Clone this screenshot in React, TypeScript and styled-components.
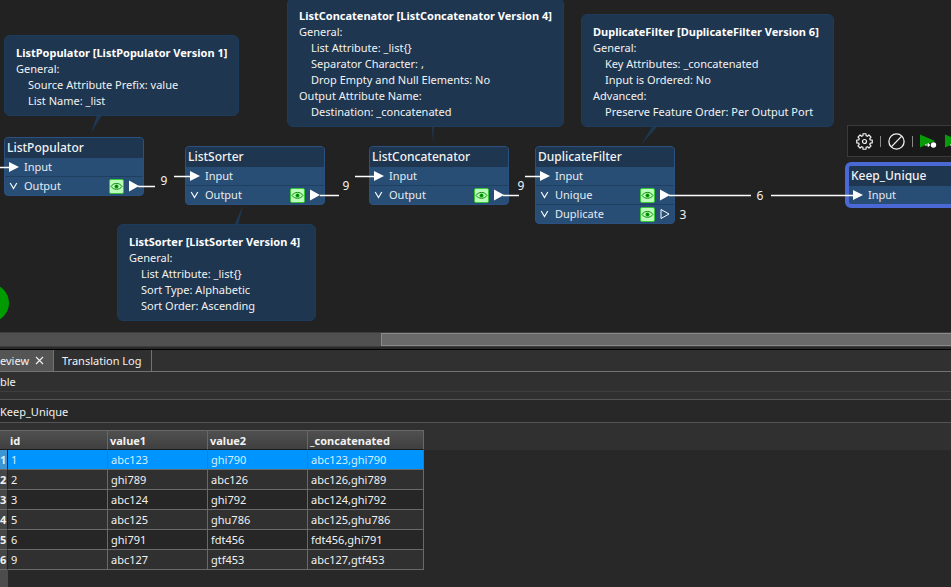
import React from "react";
import styled, { createGlobalStyle, css } from "styled-components";

const GlobalStyle = createGlobalStyle`
  * { box-sizing: border-box; }
  body {
    margin: 0;
    background: #292929;
    color: #f2f2f2;
    font-family: "Noto Sans", "Open Sans", sans-serif;
    font-size: 11px;
    line-height: 16px;
    overflow: hidden;
  }
  button {
    font: inherit;
    color: inherit;
    background: none;
    border: 0;
    padding: 0;
  }
`;

const Page = styled.div`
  display: flex;
  flex-direction: column;
  min-height: 100vh;
`;

const Canvas = styled.main`
  position: relative;
  height: 332px;
  overflow: hidden;
  background: #222222;
`;

const Wires = styled.svg`
  position: absolute;
  inset: 0;
  width: 100%;
  height: 100%;
  pointer-events: none;
`;

const Note = styled.section<{ $x: number; $y: number; $w: number }>`
  position: absolute;
  left: ${(p) => p.$x}px;
  top: ${(p) => p.$y}px;
  width: ${(p) => p.$w}px;
  padding: 9px 11px 6px;
  border: 1px solid #1d3c5c;
  border-radius: 6px;
  background: #1e3650;
  white-space: nowrap;
`;

const NoteTitle = styled.h2`
  margin: 0;
  font-size: 11px;
  line-height: 16px;
  font-weight: 700;
  color: #ffffff;
`;

const NoteLine = styled.div<{ $indent?: boolean }>`
  padding-left: ${(p) => (p.$indent ? 12 : 0)}px;
`;

const NodeBox = styled.section<{ $x: number; $y: number; $selected?: boolean }>`
  position: absolute;
  left: ${(p) => p.$x}px;
  top: ${(p) => p.$y}px;
  width: 140px;
  overflow: hidden;
  border: 1px solid #2b5180;
  border-radius: 4px;
  background: #294e75;
  ${(p) =>
    p.$selected &&
    css`
      border: 4px solid #4a69d4;
      border-radius: 6px;
    `}
`;

const NodeTitle = styled.h3`
  margin: 0;
  padding-left: 2px;
  height: 20px;
  background: #1e3650;
  font-size: 12px;
  line-height: 20px;
  font-weight: 500;
`;

const Port = styled.div`
  display: flex;
  align-items: center;
  gap: 5px;
  height: 18px;
  padding: 0 4px;
  color: #e6ebf0;
  & + & {
    border-top: 1px solid #1f3f61;
    height: 19px;
  }
`;

const PortLabel = styled.span`
  flex: 1;
`;

const IconButton = styled.button`
  display: flex;
  flex: none;
`;

const Count = styled.span<{ $x: number; $y: number }>`
  position: absolute;
  left: ${(p) => p.$x}px;
  top: ${(p) => p.$y}px;
  width: 12px;
  font-size: 12px;
  text-align: center;
`;

const NodeTools = styled.div`
  position: absolute;
  left: 847px;
  top: 125px;
  display: flex;
  align-items: center;
  height: 32px;
  width: 160px;
  gap: 7px;
  padding-left: 8px;
  border: 1px solid #3a3a3a;
  background: #191919;
`;

const Divider = styled.span`
  width: 1px;
  height: 11px;
  background: #8a8a8a;
`;

const RunBadge = styled.button`
  position: absolute;
  left: -29px;
  top: 284px;
  width: 38px;
  height: 38px;
  border-radius: 50%;
  background: #009b00;
`;

const ScrollTrack = styled.div`
  height: 15px;
  padding-left: 40%;
  border-top: 1px solid #3d3d3d;
  border-bottom: 1px solid #3d3d3d;
  background: #505050;
`;

const ScrollThumb = styled.div`
  height: 13px;
  margin-left: 1px;
  border: 1px solid #8a8a8a;
  border-width: 1px 0 1px 1px;
  background: #6a6a6a;
`;

const Splitter = styled.div`
  height: 3px;
  background: #292929;
  border-bottom: 1px solid #000000;
`;

const TabBar = styled.div`
  display: flex;
  height: 22px;
  background: #303030;
  border-bottom: 1px solid #737373;
`;

const Tab = styled.div<{ $active?: boolean }>`
  display: flex;
  align-items: center;
  gap: 6px;
  padding: 0 9px 0 ${(p) => (p.$active ? 0 : 8)}px;
  border-right: 1px solid #737373;
  background: ${(p) => (p.$active ? "#555555" : "#303030")};
`;

const MenuRow = styled.div`
  height: 20px;
  padding-top: 2px;
  background: #303030;
  border-bottom: 1px solid #3e3e3e;
`;

const Gap = styled.div`
  height: 7px;
  background: #303030;
`;

const SourceRow = styled.div`
  height: 24px;
  padding-top: 4px;
  border-top: 1px solid #555555;
  border-bottom: 1px solid #555555;
  background: #282828;
`;

const TableArea = styled.div`
  flex: 1;
  background: linear-gradient(#303030 20px, #282828 20px);
`;

const RowFooter = styled.div`
  width: 8px;
  height: 17px;
  background: #4c4c4c;
`;

const Table = styled.table`
  width: 424px;
  table-layout: fixed;
  border-collapse: separate;
  border-spacing: 0;
`;

const ColHead = styled.th`
  height: 20px;
  padding: 2px 2px 0;
  border-top: 1px solid #686868;
  border-right: 1px solid #686868;
  border-bottom: 1px solid #1c1c1c;
  background: linear-gradient(#505050, #3f3f3f);
  text-align: left;
  font-weight: 700;
  line-height: 16px;
`;

const Corner = styled(ColHead)`
  border-right: 0;
`;

const RowHead = styled.th<{ $selected?: boolean }>`
  height: 20px;
  padding: 0;
  border-right: 1px solid #222222;
  border-bottom: 1px solid #6a6a6a;
  background: ${(p) => (p.$selected ? "#3c94d0" : "#464646")};
  text-align: left;
  font-weight: 700;
  line-height: 18px;
`;

const Cell = styled.td`
  padding: 0 3px;
  border-right: 1px solid #6a6a6a;
  border-bottom: 1px solid #6a6a6a;
  line-height: 18px;
`;

const Row = styled.tr<{ $selected?: boolean }>`
  background: #262626;
  &:nth-child(even) {
    background: #303030;
  }
  ${(p) =>
    p.$selected &&
    css`
      background: #0094fe;
      color: #d5efff;
    `}
`;

const InArrow = () => (
  <svg width="10" height="12" aria-hidden="true">
    <path d="M0 1 10 6 0 11Z" fill="#fff" />
  </svg>
);

const OutArrow = ({ hollow }: { hollow?: boolean }) => (
  <svg width="10" height="12" aria-hidden="true">
    {hollow ? (
      <path d="M1 1.5 9 6 1 10.5Z" fill="none" stroke="#fff" />
    ) : (
      <path d="M0 0.5 10 6 0 11.5Z" fill="#fff" />
    )}
  </svg>
);

const Chevron = () => (
  <svg width="10" height="8" aria-hidden="true">
    <path d="M1.2 1 4.5 6.6 7.8 1" fill="none" stroke="#f0f4f8" strokeWidth="1.2" />
  </svg>
);

const Eye = () => (
  <svg width="15" height="15" aria-hidden="true">
    <rect x="0.5" y="0.5" width="14" height="14" rx="1.5" fill="#b9fdb9" stroke="#37c637" />
    <path d="M2 7.5C4.5 3.4 10.5 3.4 13 7.5 10.5 11.2 4.5 11.2 2 7.5Z" fill="none" stroke="#128a12" />
    <circle cx="7.5" cy="7.4" r="2" fill="#0aa00a" />
    <circle cx="7.5" cy="7.4" r="0.8" fill="#075f07" />
  </svg>
);

const gearPath = (() => {
  const pts: string[] = [];
  for (let i = 0; i < 8; i++) {
    const base = (i * Math.PI) / 4;
    [
      [-0.27, 6],
      [-0.19, 7.9],
      [0.19, 7.9],
      [0.27, 6],
    ].forEach(([a, r]) => {
      pts.push(`${(8.5 + r * Math.sin(base + a)).toFixed(2)} ${(8.5 - r * Math.cos(base + a)).toFixed(2)}`);
    });
  }
  return `M${pts.join("L")}Z`;
})();

const Gear = () => (
  <svg width="17" height="17" fill="none" stroke="#f2f2f2" strokeWidth="1.2" strokeLinejoin="round" aria-hidden="true">
    <path d={gearPath} />
    <circle cx="8.5" cy="8.5" r="2" />
  </svg>
);

const Ban = () => (
  <svg width="17" height="17" fill="none" stroke="#f2f2f2" strokeWidth="1.3" aria-hidden="true">
    <circle cx="8.5" cy="8.5" r="7.6" />
    <path d="M3.3 13.9 13.7 3.1" />
  </svg>
);

const RunTo = () => (
  <svg width="18" height="16" aria-hidden="true">
    <path d="M0 1.5 15 8 0 14.5Z" fill="#079c07" />
    <path d="M5 12h4M7.8 10.3 9.6 12 7.8 13.7" fill="none" stroke="#fff" strokeWidth="1.1" />
    <circle cx="13.5" cy="12" r="2.7" fill="#fff" />
  </svg>
);

type NoteData = { x: number; y: number; w: number; title: string; lines: [string, boolean][] };

const notes: NoteData[] = [
  {
    x: 4, y: 35, w: 235, title: "ListPopulator [ListPopulator Version 1]",
    lines: [["General:", false], ["Source Attribute Prefix: value", true], ["List Name: _list", true]],
  },
  {
    x: 117, y: 224, w: 199, title: "ListSorter [ListSorter Version 4]",
    lines: [["General:", false], ["List Attribute: _list{}", true], ["Sort Type: Alphabetic", true], ["Sort Order: Ascending", true]],
  },
  {
    x: 287, y: -2, w: 277, title: "ListConcatenator [ListConcatenator Version 4]",
    lines: [
      ["General:", false], ["List Attribute: _list{}", true], ["Separator Character: ,", true],
      ["Drop Empty and Null Elements: No", true], ["Output Attribute Name:", false], ["Destination: _concatenated", true],
    ],
  },
  {
    x: 581, y: 14, w: 253, title: "DuplicateFilter [DuplicateFilter Version 6]",
    lines: [
      ["General:", false], ["Key Attributes: _concatenated", true], ["Input is Ordered: No", true],
      ["Advanced:", false], ["Preserve Feature Order: Per Output Port", true],
    ],
  },
];

type Output = { name: string; empty?: boolean };
type NodeData = { x: number; y: number; name: string; outputs: Output[]; selected?: boolean };

const nodes: NodeData[] = [
  { x: 4, y: 137, name: "ListPopulator", outputs: [{ name: "Output" }] },
  { x: 185, y: 146, name: "ListSorter", outputs: [{ name: "Output" }] },
  { x: 369, y: 146, name: "ListConcatenator", outputs: [{ name: "Output" }] },
  { x: 535, y: 146, name: "DuplicateFilter", outputs: [{ name: "Unique" }, { name: "Duplicate", empty: true }] },
  { x: 845, y: 162, name: "Keep_Unique", outputs: [], selected: true },
];

const counts = [
  { x: 158, y: 173, n: 9 },
  { x: 340, y: 178, n: 9 },
  { x: 515, y: 178, n: 9 },
  { x: 754, y: 188, n: 6 },
  { x: 677, y: 207, n: 3 },
];

const columns = ["id", "value1", "value2", "_concatenated"];
const rows = [
  ["1", "abc123", "ghi790", "abc123,ghi790"],
  ["2", "ghi789", "abc126", "abc126,ghi789"],
  ["3", "abc124", "ghi792", "abc124,ghi792"],
  ["5", "abc125", "ghu786", "abc125,ghu786"],
  ["6", "ghi791", "fdt456", "fdt456,ghi791"],
  ["9", "abc127", "gtf453", "abc127,gtf453"],
];

export default function App() {
  return (
    <Page>
      <GlobalStyle />
      <Canvas>
        <Wires aria-hidden="true">
          <g fill="#1e3853">
            <path d="M97 115h5L91 133Z" />
            <path d="M234 226h4L243 205Z" />
            <path d="M432 126h2L433 144Z" />
            <path d="M652 127h5L641 145Z" />
          </g>
        </Wires>
        {notes.map((note) => (
          <Note key={note.title} $x={note.x} $y={note.y} $w={note.w}>
            <NoteTitle>{note.title}</NoteTitle>
            {note.lines.map(([text, indent]) => (
              <NoteLine key={text} $indent={indent}>{text}</NoteLine>
            ))}
          </Note>
        ))}
        {nodes.map((node) => (
          <NodeBox key={node.name} $x={node.x} $y={node.y} $selected={node.selected}>
            <NodeTitle>{node.name}</NodeTitle>
            <Port>
              <InArrow />
              <PortLabel>Input</PortLabel>
            </Port>
            {node.outputs.map((out) => (
              <Port key={out.name}>
                <IconButton aria-label={`Expand ${out.name}`}><Chevron /></IconButton>
                <PortLabel>{out.name}</PortLabel>
                <IconButton aria-label={`Inspect ${out.name}`}><Eye /></IconButton>
                <OutArrow hollow={out.empty} />
              </Port>
            ))}
          </NodeBox>
        ))}
        <Wires aria-hidden="true">
          <path
            d="M0 167.5H10M138 186.5H155M174 176.5H191M320 195.5H339M355 176.5H375M503 195.5H519M525 176.5H541M669 195.5H751M771 195.5H854"
            stroke="#fff"
            strokeWidth="1.4"
          />
        </Wires>
        {counts.map((c) => (
          <Count key={`${c.x}`} $x={c.x} $y={c.y}>{c.n}</Count>
        ))}
        <NodeTools>
          <IconButton aria-label="Settings"><Gear /></IconButton>
          <Divider />
          <IconButton aria-label="Disable"><Ban /></IconButton>
          <Divider />
          <IconButton aria-label="Run to this"><RunTo /></IconButton>
          <IconButton aria-label="Run from this"><RunTo /></IconButton>
        </NodeTools>
        <RunBadge aria-label="Run" />
      </Canvas>
      <ScrollTrack><ScrollThumb /></ScrollTrack>
      <Splitter />
      <TabBar>
        <Tab $active>
          <button>eview</button>
          <IconButton aria-label="Close tab">
            <svg width="9" height="9" aria-hidden="true">
              <path d="M1 1 8 8M8 1 1 8" stroke="#eee" strokeWidth="1.2" />
            </svg>
          </IconButton>
        </Tab>
        <Tab><button>Translation Log</button></Tab>
      </TabBar>
      <MenuRow>ble</MenuRow>
      <Gap />
      <SourceRow>Keep_Unique</SourceRow>
      <Gap />
      <TableArea>
        <Table>
          <colgroup>
            <col width="8" />
            <col width="100" />
            <col width="100" />
            <col width="100" />
            <col width="116" />
          </colgroup>
          <thead>
            <tr>
              <Corner aria-label="Row" />
              {columns.map((c) => <ColHead key={c} scope="col">{c}</ColHead>)}
            </tr>
          </thead>
          <tbody>
            {rows.map((row, i) => (
              <Row key={row[0]} $selected={i === 0}>
                <RowHead scope="row" $selected={i === 0}>{i + 1}</RowHead>
                {row.map((v, j) => <Cell key={j}>{v}</Cell>)}
              </Row>
            ))}
          </tbody>
        </Table>
        <RowFooter />
      </TableArea>
    </Page>
  );
}
